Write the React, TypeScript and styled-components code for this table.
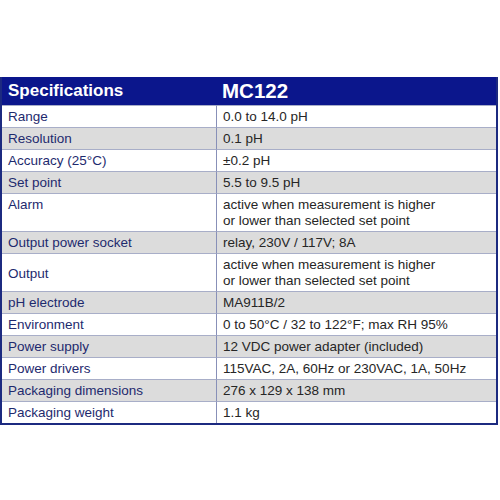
import styled, { createGlobalStyle } from 'styled-components';

const GlobalStyle = createGlobalStyle`
  html, body {
    margin: 0;
    padding: 0;
    background: #ffffff;
  }
  body {
    font-family: 'Liberation Sans', Arial, sans-serif;
  }
`;

const Page = styled.div`
  width: 500px;
  height: 500px;
  padding-top: 77px;
  box-sizing: border-box;
`;

const Table = styled.div`
  width: 498px;
  border: 2px solid #1c2a80;
  border-top: none;
  box-sizing: border-box;
  display: grid;
  grid-template-columns: 214px 1fr;
`;

const HeaderCell = styled.div`
  background: #0b168c;
  color: #ffffff;
  font-weight: bold;
  height: 28px;
  display: flex;
  align-items: center;
  padding-left: 6px;
  font-size: 17px;
`;

const ModelCell = styled(HeaderCell)`
  font-size: 20.5px;
`;

const Cell = styled.div<{ $shade: boolean; $label?: boolean; $center?: boolean }>`
  background: ${({ $shade }) => ($shade ? '#dcdcdc' : '#ffffff')};
  color: ${({ $label }) => ($label ? '#1e2a6e' : '#262626')};
  font-size: 13.5px;
  line-height: 16px;
  min-height: 22px;
  padding: 3px 6px 0;
  box-sizing: border-box;
  border-top: 1px solid #a8aec8;
  border-left: ${({ $label }) => ($label ? 'none' : '1px solid #8890b8')};
  display: flex;
  align-items: ${({ $center }) => ($center ? 'center' : 'flex-start')};
`;

const Lines = styled.div`
  padding-bottom: 2px;
`;

const rows: { label: string; value: string[]; center?: boolean }[] = [
  { label: 'Range', value: ['0.0 to 14.0 pH'] },
  { label: 'Resolution', value: ['0.1 pH'] },
  { label: 'Accuracy (25°C)', value: ['±0.2 pH'] },
  { label: 'Set point', value: ['5.5 to 9.5 pH'] },
  { label: 'Alarm', value: ['active when measurement is higher', 'or lower than selected set point'] },
  { label: 'Output power socket', value: ['relay, 230V / 117V; 8A'] },
  {
    label: 'Output',
    value: ['active when measurement is higher', 'or lower than selected set point'],
    center: true,
  },
  { label: 'pH electrode', value: ['MA911B/2'] },
  { label: 'Environment', value: ['0 to 50°C / 32 to 122°F; max RH 95%'] },
  { label: 'Power supply', value: ['12 VDC power adapter (included)'] },
  { label: 'Power drivers', value: ['115VAC, 2A, 60Hz or 230VAC, 1A, 50Hz'] },
  { label: 'Packaging dimensions', value: ['276 x 129 x 138 mm'] },
  { label: 'Packaging weight', value: ['1.1 kg'] },
];

export default function App() {
  return (
    <>
      <GlobalStyle />
      <Page>
        <Table>
          <HeaderCell>Specifications</HeaderCell>
          <ModelCell>MC122</ModelCell>
          {rows.map((row, i) => {
            const shade = i % 2 === 1;
            return [
              <Cell key={`l${i}`} $shade={shade} $label $center={row.center}>
                {row.label}
              </Cell>,
              <Cell key={`v${i}`} $shade={shade}>
                <Lines>
                  {row.value.map((line) => (
                    <div key={line}>{line}</div>
                  ))}
                </Lines>
              </Cell>,
            ];
          })}
        </Table>
      </Page>
    </>
  );
}
